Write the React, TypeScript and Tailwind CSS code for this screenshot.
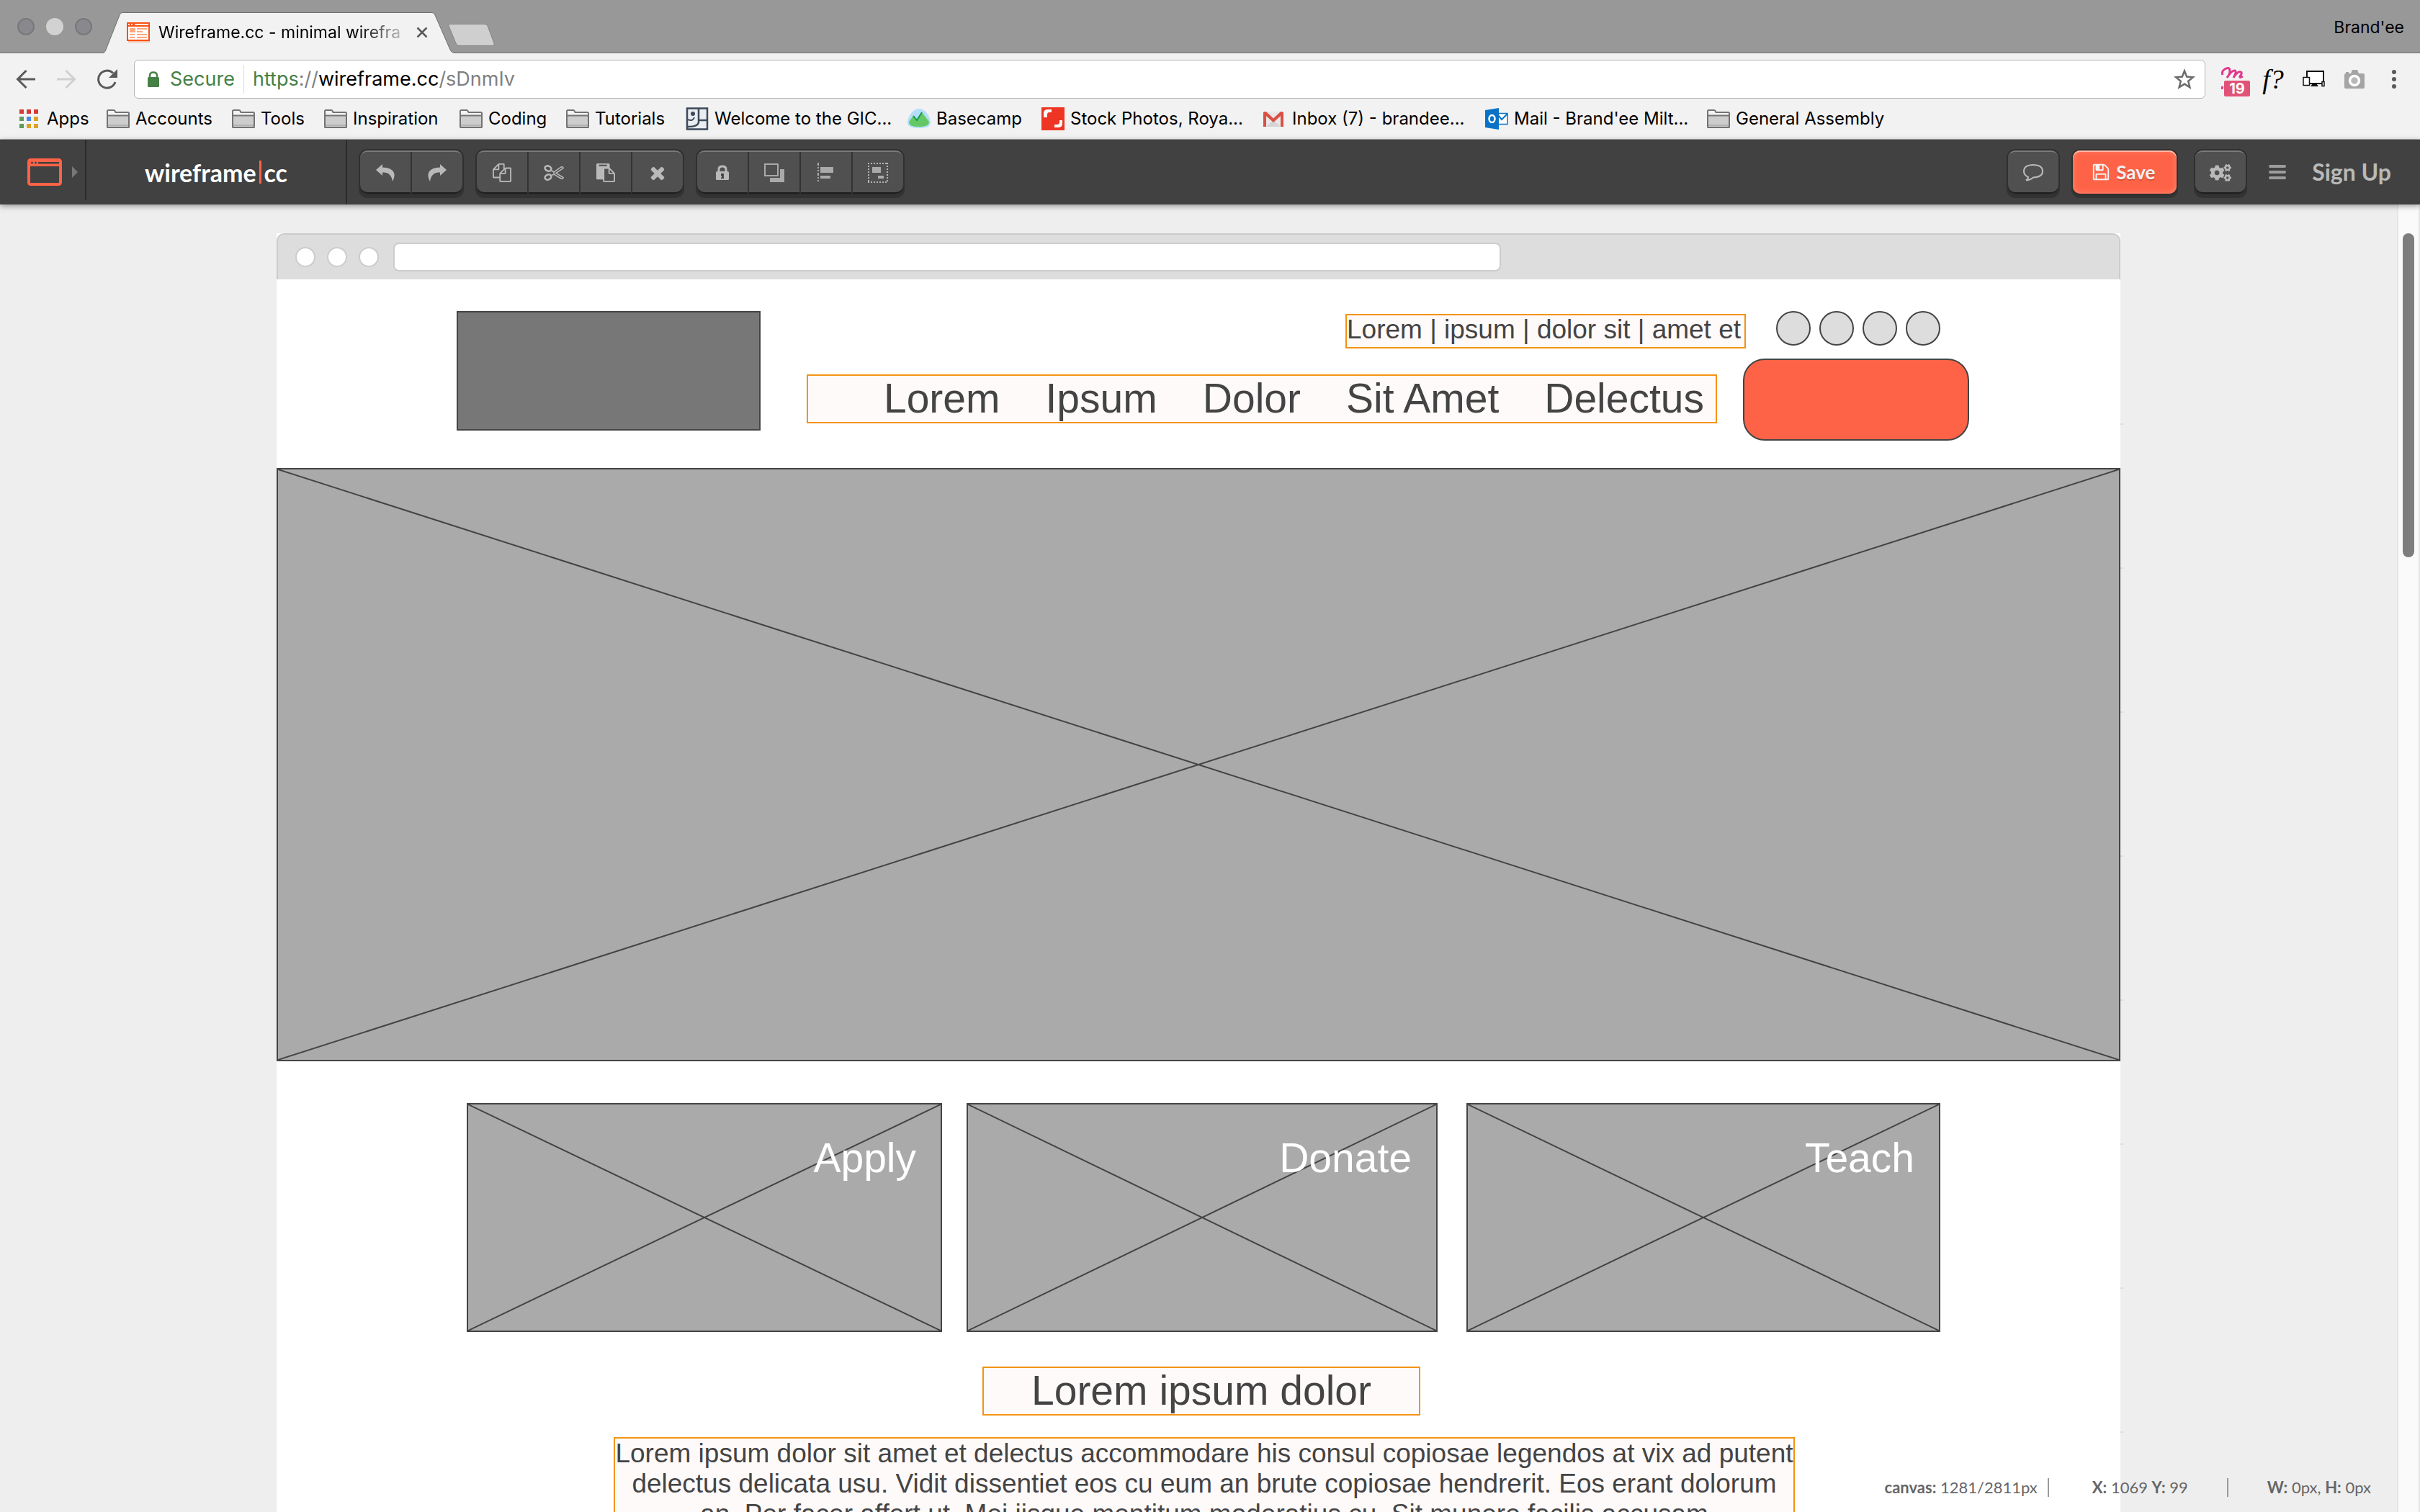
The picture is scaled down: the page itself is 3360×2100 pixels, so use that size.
import React from "react";
import { FaCogs } from "react-icons/fa";

function Folder() {
  return (
    <svg width="32" height="26" viewBox="0 0 32 26" className="shrink-0" aria-hidden="true">
      <path d="M1 24.5V2.5Q1 1 2.5 1H10q1 0 1.500 1l1 2H29.500Q31 4 31 5.500V24.500Z" fill="#f3f3f3" stroke="#737373" strokeWidth="2" />
      <path d="M2 9H30V24H2Z" fill="#cdcdcd" />
      <path d="M1 8.500H31" stroke="#737373" strokeWidth="2" />
      <path d="M2 22H30" stroke="#b4b4b4" strokeWidth="2" />
      <path d="M1 25H31" stroke="#737373" strokeWidth="2" />
    </svg>
  );
}

function AppsGrid() {
  const colors = ["#d63a35", "#d63a35", "#d63a35", "#5d9c5a", "#4a87ee", "#dba325", "#5d9c5a", "#dba325", "#dba325"];
  return (
    <svg width="27" height="26" viewBox="0 0 27 26" className="shrink-0" aria-hidden="true">
      {colors.map((c, i) => (
        <rect key={i} x={(i % 3) * 10 + 1} y={Math.floor(i / 3) * 10} width="6" height="6" fill={c} />
      ))}
    </svg>
  );
}

function Welcome() {
  return (
    <svg width="32" height="32" viewBox="0 0 32 32" className="shrink-0" aria-hidden="true">
      <path d="M2 1.500H30V30.500H2Z" fill="#e9edf1" stroke="#3d4a59" strokeWidth="2.500" />
      <path d="M18 2V20Q18 27 3 27M18 18H30" fill="none" stroke="#3d4a59" strokeWidth="2.500" />
      <circle cx="10" cy="9" r="3" fill="#3d4a59" />
      <path d="M3 17Q10 20 12 14" fill="none" stroke="#3d4a59" strokeWidth="2" />
    </svg>
  );
}

function Basecamp() {
  return (
    <svg width="32" height="28" viewBox="0 0 32 28" className="shrink-0" aria-hidden="true">
      <path d="M16 0C26 0 32 13 32 19C32 25 25 27 16 27C7 27 0 25 0 19C0 13 6 0 16 0Z" fill="#b5defb" />
      <path d="M2 18L8 10L13 16L20 5L30 18C30 24 24 25 16 25C8 25 2 24 2 18Z" fill="#64c864" />
      <path d="M8 10L13 16L20 5" fill="none" stroke="#149a51" strokeWidth="2" />
    </svg>
  );
}

function Stock() {
  return (
    <svg width="32" height="32" viewBox="0 0 32 32" className="shrink-0" aria-hidden="true">
      <path d="M0 0H32V32H0Z" fill="#ee3524" />
      <path d="M3 14V8Q3 3 9 3H14V7H11Q8 7 8 10V14ZM29 18V23Q29 28 23 28H18V24H21Q25 24 25 21V18Z" fill="#fff" />
    </svg>
  );
}

function Gmail() {
  return (
    <svg width="28" height="21" viewBox="0 0 28 21" className="shrink-0" aria-hidden="true">
      <path d="M1 0H27V21H1Z" fill="#e9e7e7" />
      <path d="M4 21L14 12L24 21Z" fill="#d6d4d4" />
      <path d="M0 1Q3 -1 5 1L14 9.500L23 1Q25 -1 28 1V21H24V6L14 15L4 6V21H0Z" fill="#d94f43" />
    </svg>
  );
}

function Outlook() {
  return (
    <svg width="32" height="30" viewBox="0 0 32 30" className="shrink-0" aria-hidden="true">
      <path d="M17 7.500H31V22.500H17Z" fill="#fff" stroke="#0a72c6" strokeWidth="1.500" />
      <path d="M18 10L23 16L31 8" fill="none" stroke="#0a72c6" strokeWidth="2" />
      <path d="M0 3L19 0V30L0 27Z" fill="#0a72c6" />
      <ellipse cx="9.500" cy="15" rx="4" ry="5" fill="none" stroke="#fff" strokeWidth="2.500" />
    </svg>
  );
}

type Bookmark = { label: string; icon: React.ReactNode; width: string };
const bookmarks: Bookmark[] = [
  { label: "Apps", icon: <AppsGrid />, width: "w-[122px] gap-3" },
  { label: "Accounts", icon: <Folder />, width: "w-[174px] gap-2" },
  { label: "Tools", icon: <Folder />, width: "w-[128px] gap-2" },
  { label: "Inspiration", icon: <Folder />, width: "w-[188px] gap-2" },
  { label: "Coding", icon: <Folder />, width: "w-[148px] gap-2" },
  { label: "Tutorials", icon: <Folder />, width: "w-[166px] gap-2" },
  { label: "Welcome to the GIC...", icon: <Welcome />, width: "w-[308px] gap-2" },
  { label: "Basecamp", icon: <Basecamp />, width: "w-[186px] gap-2" },
  { label: "Stock Photos, Roya...", icon: <Stock />, width: "w-[308px] gap-2" },
  { label: "Inbox (7) - brandee...", icon: <Gmail />, width: "w-[308px] gap-3" },
  { label: "Mail - Brand'ee Milt...", icon: <Outlook />, width: "w-[308px] gap-2" },
  { label: "General Assembly", icon: <Folder />, width: "w-[260px] gap-2" },
];

function TabStrip() {
  return (
    <div className="relative flex h-[74px] items-center border-b border-[#6f6f6f] bg-[#989898]">
      <div className="flex gap-4 pl-6">
        <span className="size-6 rounded-full border-2 border-[#78777b] bg-[#89888c]" />
        <span className="size-6 rounded-full bg-[#d2d2d2]" />
        <span className="size-6 rounded-full border-2 border-[#78777b] bg-[#89888c]" />
      </div>
      <div className="relative ml-4 flex h-[74px] w-[486px] items-center pt-4 pl-8">
        <svg width="486" height="58" viewBox="0 0 486 58" className="absolute top-[17px] left-0" aria-hidden="true">
          <path d="M0 56.500Q2 55 3 52L22 4Q23 .500 26 .500H456Q459 .500 460 4L481 52Q482 55 486 56.500V58H0Z" fill="#f2f2f2" />
          <path d="M0 56.500Q2 55 3 52L22 4Q23 .500 26 .500H456Q459 .500 460 4L481 52Q482 55 486 56.500" fill="none" stroke="#6f6f6f" />
        </svg>
        <svg width="32" height="28" viewBox="0 0 32 28" className="relative shrink-0" aria-hidden="true">
          <path d="M0 0H32V26H0Z" fill="#fb4f14" />
          <path d="M2 6H30V24H2ZM2 2H4V4H2ZM6 2H8V4H6ZM11 2H30V4H11Z" fill="#fff" />
          <path d="M4 8H12V14H4ZM14 8H28V10H14ZM14 12H22V14H14ZM4 16H11V18H4ZM14 16H28V18H14ZM4 20H11V22H4ZM14 20H28V22H14Z" fill="#fda87f" />
          <path d="M2 26H32V28H2Z" fill="#f6bfa5" />
        </svg>
        <span className="relative ml-3 w-[352px] bg-linear-to-r from-black from-75% to-[#f2f2f2] bg-clip-text text-[23px] leading-8 whitespace-nowrap text-transparent">
          Wireframe.cc - minimal wirefra
        </span>
        <button aria-label="Close tab" className="relative ml-[6px]">
          <svg width="16" height="16" viewBox="0 0 16 16">
            <path d="M1.500 1.500L14.500 14.500M14.500 1.500L1.500 14.500" stroke="#5a5a5a" strokeWidth="2.500" />
          </svg>
        </button>
      </div>
      <button aria-label="New tab" className="-ml-2 pt-6">
        <svg width="66" height="32" viewBox="0 0 66 32">
          <path d="M1 3Q0 .500 3 .500H50Q54 .500 55 3L64 27Q65 30.500 62 30.500H16Q12 30.500 11 27Z" fill="#cfcfcf" stroke="#868686" />
        </svg>
      </button>
      <span className="mr-[22px] ml-auto pt-1 text-[23px]">Brand'ee</span>
    </div>
  );
}

function AddressBar() {
  return (
    <div className="flex h-[72px] items-center bg-[#f2f2f2] pr-8 pl-[22px]">
      <button aria-label="Back">
        <svg width="28" height="28" viewBox="0 0 28 28"><path d="M27 14H3M14.500 2L2.500 14L14.500 26" fill="none" stroke="#5a5a5a" strokeWidth="3" /></svg>
      </button>
      <button aria-label="Forward" className="ml-7">
        <svg width="28" height="28" viewBox="0 0 28 28"><path d="M1 14H25M13.500 2L25.500 14L13.500 26" fill="none" stroke="#d0d0d0" strokeWidth="3" /></svg>
      </button>
      <button aria-label="Reload" className="ml-7">
        <svg width="30" height="28" viewBox="0 0 30 28">
          <path d="M26 18A12 12 0 1 1 23 5.500" fill="none" stroke="#5a5a5a" strokeWidth="3" />
          <path d="M29 0V12H17Z" fill="#5a5a5a" />
        </svg>
      </button>
      <div className="ml-[22px] flex h-[54px] flex-1 items-center rounded-md border border-[#b4b4b4] bg-white pr-[13px] pl-[17px]">
        <svg width="18" height="22" viewBox="0 0 18 22" aria-hidden="true">
          <path d="M4 9V6Q4 1.500 9 1.500Q14 1.500 14 6V9" fill="none" stroke="#458046" strokeWidth="2.500" />
          <rect x="1" y="8" width="16" height="14" rx="1.500" fill="#458046" />
        </svg>
        <span className="ml-[14px] text-[27px] text-[#458046]">Secure</span>
        <span className="ml-3 h-10 w-px bg-[#dcdcdc]" />
        <div role="textbox" aria-label="Address" className="ml-3 flex-1 text-[27px] text-[#808080]">
          <span className="text-[#458046]">https</span>://<span className="text-black">wireframe.cc</span>/sDnmIv
        </div>
        <button aria-label="Bookmark this page">
          <svg width="30" height="30" viewBox="0 0 30 30">
            <path d="M15 3.500L18.200 11.600L27 12.200L20.200 17.800L22.400 26.300L15 21.600L7.600 26.300L9.800 17.800L3 12.200L11.800 11.600Z" fill="none" stroke="#6b6b6b" strokeWidth="2.500" />
          </svg>
        </button>
      </div>
      <button aria-label="Momentum" className="relative ml-[22px] h-9 w-8">
        <svg width="32" height="36" viewBox="0 0 32 36">
          <path d="M2 12Q0 7 5 4Q12 0 12 7Q12 11 8 16Q15 5 19 6Q22 7 17 16Q23 6 27 8Q30 9 26 14Q25 17 30 14M2 28Q1 30 1 32" fill="none" stroke="#e0398c" strokeWidth="3" />
        </svg>
        <span className="absolute top-5 left-1 h-[22px] w-9 rounded-xs bg-[#e05277] text-[20px] leading-[22px] font-bold text-white">19</span>
      </button>
      <button aria-label="WhatFont" className="ml-6 h-11 w-8 font-['Liberation_Serif',serif] text-[38px] leading-10 italic">f?</button>
      <button aria-label="Viewport resizer" className="ml-6">
        <svg width="32" height="32" viewBox="0 -2 32 32">
          <path d="M7 11V3H30V20H11" fill="#fff" stroke="#111" strokeWidth="2" />
          <path d="M2 11.500H10.500V22.500H2Z" fill="#fff" stroke="#111" strokeWidth="1.500" />
          <path d="M15 20H20L23 24H12Z" fill="#111" />
          <path d="M28 17.500H31V23.500H28Z" fill="#fff" stroke="#111" strokeWidth="1.500" />
        </svg>
      </button>
      <button aria-label="Screenshot" className="ml-[26px]">
        <svg width="30" height="28" viewBox="0 0 30 28">
          <path d="M1 8Q1 6 3 6V4H7V6H10L12 1H19L21 6H27Q29 6 29 8V25Q29 27 27 27H3Q1 27 1 25Z" fill="#a5a5a5" />
          <circle cx="15" cy="16" r="6.500" fill="#b9b9b9" stroke="#fff" strokeWidth="3.500" />
        </svg>
      </button>
      <button aria-label="Browser menu" className="ml-9">
        <svg width="8" height="28" viewBox="0 0 8 28"><circle cx="4" cy="4" r="3" fill="#5a5a5a" /><circle cx="4" cy="14" r="3" fill="#5a5a5a" /><circle cx="4" cy="24" r="3" fill="#5a5a5a" /></svg>
      </button>
    </div>
  );
}

function Fa({ d, size = 26 }: { d: string; size?: number }) {
  return (
    <svg width={size} height={size} viewBox="0 0 1792 1792" fill="currentColor" aria-hidden="true">
      <path d={d} />
    </svg>
  );
}

const paths = {
  copy: "M1696 384q40 0 68 28t28 68v1216q0 40-28 68t-68 28h-960q-40 0-68-28t-28-68v-288h-544q-40 0-68-28t-28-68v-672q0-40 20-88t48-76l408-408q28-28 76-48t88-20h416q40 0 68 28t28 68v328q68-40 128-40h416zm-544 213l-299 299h299v-299zm-640-384l-299 299h299v-299zm196 647l316-316v-416h-384v416q0 40-28 68t-68 28h-416v640h512v-256q0-40 20-88t48-76zm956 804v-1152h-384v416q0 40-28 68t-68 28h-416v640h896z",
  paste: "M768 1664h896v-640h-416q-40 0-68-28t-28-68v-416h-384v1152zm256-1440v-64q0-13-9.500-22.500t-22.500-9.500h-704q-13 0-22.500 9.500t-9.500 22.500v64q0 13 9.500 22.500t22.500 9.500h704q13 0 22.500-9.500t9.500-22.500zm256 672h299l-299-299v299zm512 128v672q0 40-28 68t-68 28h-960q-40 0-68-28t-28-68v-160h-544q-40 0-68-28t-28-68v-1344q0-40 28-68t68-28h1088q40 0 68 28t28 68v328q21 13 36 28l408 408q28 28 48 76t20 88z",
  times: "M1490 1322q0 40-28 68l-136 136q-28 28-68 28t-68-28l-294-294-294 294q-28 28-68 28t-68-28l-136-136q-28-28-28-68t28-68l294-294-294-294q-28-28-28-68t28-68l136-136q28-28 68-28t68 28l294 294 294-294q28-28 68-28t68 28l136 136q28 28 28 68t-28 68l-294 294 294 294q28 28 28 68z",
  save: "M512 1536h768v-384h-768v384zm896 0h128v-896q0-14-10-38.500t-20-34.500l-281-281q-10-10-34-20t-39-10v416q0 40-28 68t-68 28h-576q-40 0-68-28t-28-68v-416h-128v1280h128v-416q0-40 28-68t68-28h832q40 0 68 28t28 68v416zm-384-928v-320q0-13-9.500-22.500t-22.500-9.500h-192q-13 0-22.500 9.500t-9.500 22.500v320q0 13 9.500 22.500t22.500 9.500h192q13 0 22.500-9.500t9.500-22.500zm640 32v928q0 40-28 68t-68 28h-1344q-40 0-68-28t-28-68v-1344q0-40 28-68t68-28h928q40 0 88 20t76 48l280 280q28 28 48 76t20 88z",
};

const undo = (
  <svg width="28" height="26" viewBox="0 0 28 26" fill="currentColor"><path d="M10 1L1 9L10 17V12.500Q22 11.500 24 25Q27 19 26.500 15Q25 6 10 5.500Z" /></svg>
);
const redo = (
  <svg width="28" height="26" viewBox="0 0 28 26" fill="currentColor"><path d="M18 1L27 9L18 17V12.500Q6 11.500 4 25Q1 19 1.500 15Q3 6 18 5.500Z" /></svg>
);
const scissors = (
  <svg width="28" height="24" viewBox="0 0 28 24" fill="none" stroke="currentColor">
    <ellipse cx="6" cy="6" rx="4.500" ry="3.500" strokeWidth="2.500" transform="rotate(25 6 6)" />
    <ellipse cx="6" cy="18" rx="4.500" ry="3.500" strokeWidth="2.500" transform="rotate(-25 6 18)" />
    <path d="M10 8.500L14 11L24 4Q27 3 27 5.500L17 12.500L27 18.500Q27 21 24 20L14 14L10 16" strokeWidth="1.500" />
    <circle cx="14.500" cy="12.500" r="1" strokeWidth="1" />
  </svg>
);
const lock = (
  <svg width="18" height="22" viewBox="0 0 18 22">
    <path d="M4 10V6Q4 2 9 2Q14 2 14 6V10" fill="none" stroke="currentColor" strokeWidth="3" />
    <rect x="0" y="9" width="18" height="12" rx="1.500" fill="currentColor" />
    <path d="M7 12H11V15L10 16H11V19H7V18L8 17V15H7Z" fill="#414141" />
  </svg>
);
const layers = (
  <svg width="28" height="26" viewBox="0 0 28 26">
    <path d="M22 8H28V26H8V20H22Z" fill="#aaa" />
    <path d="M1 1H19V17H1Z" fill="none" stroke="#aaa" strokeWidth="2" />
  </svg>
);
const align = (
  <svg width="24" height="28" viewBox="0 0 24 28">
    <path d="M1 0V28" stroke="#aaa" strokeWidth="2" strokeDasharray="4 2 2 2 2 2" />
    <path d="M4 6H22V14H4ZM4 18H18V22H4Z" fill="#aaa" />
  </svg>
);
const group = (
  <svg width="28" height="28" viewBox="0 0 28 28">
    <path d="M0 1H28M0 27H28M1 0V28M27 0V28" fill="none" stroke="#b4b4b4" strokeWidth="2" strokeDasharray="2 2" />
    <path d="M6 6H18V14H6ZM14 18H22V22H14Z" fill="#aaa" />
  </svg>
);

const raised =
  "rounded-[10px] border-t-2 border-[#7a7a7a] bg-[#505050] text-[#b9b9b9] shadow-[inset_0_-2px_0_#1f1f1f,0_0_0_2px_#303030,0_4px_0_2px_#333]";

function ToolGroup({ items }: { items: [string, React.ReactNode][] }) {
  return (
    <div className={`flex h-[60px] divide-x-2 divide-[#333] ${raised}`}>
      {items.map(([label, icon]) => (
        <button key={label} aria-label={label} className="box-content flex h-[58px] w-[70px] items-center justify-center">
          {icon}
        </button>
      ))}
    </div>
  );
}

function AppBar() {
  return (
    <header className="relative z-10 flex h-[90px] items-center bg-[#414141] font-[Lato,sans-serif] shadow-[0_2px_8px_rgba(0,0,0,0.4)]">
      <button aria-label="Choose device" className="flex h-[84px] w-[120px] items-center gap-[14px] self-start border-r-2 border-[#2b2b2b] pt-[6px] pl-[38px]">
        <svg width="48" height="38" viewBox="0 0 48 38">
          <path fillRule="evenodd" d="M5 0H43Q48 0 48 5V33Q48 38 43 38H5Q0 38 0 33V5Q0 0 5 0ZM4 11V34H44V11Z" fill="#ff6347" />
          <circle cx="6.500" cy="6" r="1.500" fill="#414141" /><circle cx="11.500" cy="6" r="1.500" fill="#414141" />
          <path d="M15 5H44V7.500H15Z" fill="#414141" />
        </svg>
        <svg width="8" height="16" viewBox="0 0 8 16"><path d="M0 0L8 8L0 16Z" fill="#777" /></svg>
      </button>
      <div className="flex h-full w-[362px] items-center justify-center border-r-2 border-[#2b2b2b] text-[34px] font-bold text-white">
        <span>wireframe</span>
        <span className="mx-1 h-8 w-[3px] bg-[#ff6347]" />
        <span>cc</span>
      </div>
      <div className="ml-[18px] flex gap-5">
        <ToolGroup items={[["Undo", undo], ["Redo", redo]]} />
        <ToolGroup items={[["Copy", <Fa d={paths.copy} />], ["Cut", scissors], ["Paste", <Fa d={paths.paste} />], ["Delete", <Fa d={paths.times} size={28} />]]} />
        <ToolGroup items={[["Lock", lock], ["Order", layers], ["Align", align], ["Group", group]]} />
      </div>
      <div className="ml-auto flex items-center pr-10">
        <button aria-label="Comments" className={`flex h-[60px] w-[70px] items-center justify-center ${raised}`}>
          <svg width="28" height="24" viewBox="0 0 28 24" fill="none" stroke="currentColor" strokeWidth="2">
            <path d="M7 18Q1 15 1 10Q1 1 14 1Q27 1 27 10Q27 18 14 18.500Q10 22 4 22.500Q7 21 7 18Z" />
          </svg>
        </button>
        <button className="ml-5 flex h-[60px] w-36 items-center justify-center gap-2 rounded-[10px] bg-[#ff6347] pr-1 text-[26px] font-bold text-[#f2f2f2] shadow-[inset_0_2px_0_#ffb8a8,inset_0_0_8px_#ff8b76,0_0_0_2px_#303030,0_4px_0_2px_#333] [text-shadow:0_2px_0_rgba(0,0,0,0.2)]">
          <Fa d={paths.save} />
          Save
        </button>
        <button aria-label="Settings" className={`ml-[26px] flex h-[60px] w-[70px] items-center justify-center ${raised}`}>
          <FaCogs size={30} />
        </button>
        <button aria-label="Menu" className="ml-8 grid gap-1">
          <span className="h-1 w-6 rounded-xs bg-[#9c9c9c]" />
          <span className="h-1 w-6 rounded-xs bg-[#9c9c9c]" />
          <span className="h-1 w-6 rounded-xs bg-[#9c9c9c]" />
        </button>
        <a href="#signup" className="ml-9 text-[32px] font-bold text-[#b9b9b9]">Sign Up</a>
      </div>
    </header>
  );
}

function Cross() {
  return (
    <svg className="absolute inset-0 size-full" viewBox="0 0 100 100" preserveAspectRatio="none" aria-hidden="true">
      <path d="M0 0L100 100M100 0L0 100" stroke="#444" strokeWidth="2" vectorEffect="non-scaling-stroke" />
    </svg>
  );
}

const textBox = "border-2 border-[#f39314] bg-[#fffafa] text-[#444]";

function Canvas() {
  return (
    <div className="relative w-[2560px] max-w-full self-start bg-white font-['Liberation_Sans',sans-serif] text-[#444]">
      <div className="absolute top-[264px] left-full flex flex-col gap-[198px]">
        {[1, 2, 3, 4, 5, 6, 7, 8].map((mark) => (
          <span key={mark} className="h-[2px] w-1 bg-[#ddd]" />
        ))}
      </div>
      <div className="flex h-16 items-center rounded-t-[10px] border-2 border-b-0 border-[#ccc] bg-[#ddd] pl-6">
        <div className="flex gap-4">
          <span className="size-7 rounded-full border-2 border-[#ccc] bg-white" />
          <span className="size-7 rounded-full border-2 border-[#ccc] bg-white" />
          <span className="size-7 rounded-full border-2 border-[#ccc] bg-white" />
        </div>
        <div className="ml-5 h-10 w-[1538px] rounded-lg border-2 border-[#ccc] bg-white" />
      </div>
      <div className="flex h-[262px] items-start pt-11 pl-[250px]">
        <div className="h-[166px] w-[422px] border-2 border-[#444] bg-[#777]" />
        <div className="ml-16 w-[1614px]">
          <div className="flex items-start justify-end pr-10">
            <p className={`mt-1 h-12 w-[556px] text-[37px] leading-10 whitespace-nowrap ${textBox}`}>Lorem | ipsum | dolor sit | amet et</p>
            <div className="ml-[42px] flex gap-3">
              <span className="size-12 rounded-full border-2 border-[#444] bg-[#ddd]" />
              <span className="size-12 rounded-full border-2 border-[#444] bg-[#ddd]" />
              <span className="size-12 rounded-full border-2 border-[#444] bg-[#ddd]" />
              <span className="size-12 rounded-full border-2 border-[#444] bg-[#ddd]" />
            </div>
          </div>
          <div className="mt-[14px] flex items-start gap-9">
            <nav className={`mt-[22px] flex h-[68px] flex-1 justify-end gap-[63px] pr-4 text-[57px] leading-[62px] ${textBox}`}>
              <a href="#lorem">Lorem</a>
              <a href="#ipsum">Ipsum</a>
              <a href="#dolor">Dolor</a>
              <a href="#sit-amet">Sit Amet</a>
              <a href="#delectus">Delectus</a>
            </nav>
            <button aria-label="Call to action" className="h-[114px] w-[314px] rounded-[30px] border-2 border-[#444] bg-[#ff6347]" />
          </div>
        </div>
      </div>
      <div className="relative h-[824px] border-2 border-[#444] bg-[#aaa]">
        <Cross />
      </div>
      <div className="mt-[58px] flex pl-[264px]">
        {[
          ["Apply", "w-[660px]"],
          ["Donate", "ml-[34px] w-[654px]"],
          ["Teach", "ml-10 w-[658px]"],
        ].map(([label, box]) => (
          <div key={label} className={`relative h-[318px] border-2 border-[#444] bg-[#aaa] pt-[42px] pr-[34px] text-right ${box}`}>
            <Cross />
            <p className="relative text-[57px] leading-[64px] text-white">{label}</p>
          </div>
        ))}
      </div>
      <h1 className={`mt-12 ml-[980px] h-[68px] w-[608px] text-center text-[57px] leading-[62px] ${textBox}`}>Lorem ipsum dolor</h1>
      <p className={`mt-[30px] ml-[468px] w-[1640px] text-center text-[37px] leading-[42px] ${textBox}`}>
        Lorem ipsum dolor sit amet et delectus accommodare his consul copiosae legendos at vix ad putent
        delectus delicata usu. Vidit dissentiet eos cu eum an brute copiosae hendrerit. Eos erant dolorum
        <br />
        an. Per facer affert ut. Mei iisque mentitum moderatius cu. Sit munere facilis accusam
      </p>
    </div>
  );
}

export default function App() {
  return (
    <div className="flex h-screen flex-col overflow-hidden bg-[#eee] font-[Inter,sans-serif] text-black">
      <TabStrip />
      <AddressBar />
      <nav aria-label="Bookmarks" className="flex h-12 items-center border-b border-[#a9a9a9] bg-[#f2f2f2] pb-[9px] pl-[26px]">
        {bookmarks.map((b) => (
          <a key={b.label} href="#bookmark" className={`flex shrink-0 items-center text-[24px] whitespace-nowrap ${b.width}`}>
            {b.icon}
            {b.label}
          </a>
        ))}
      </nav>
      <AppBar />
      <div className="flex min-h-0 flex-1">
        <main className="relative flex min-w-0 flex-1 justify-center overflow-hidden pt-10">
          <Canvas />
          <div className="absolute right-9 bottom-[21px] flex items-center font-[Lato,sans-serif] text-[22px] leading-[26px] text-[#666]">
            <span className="border-r-2 border-[#999] pr-[14px]"><b>canvas:</b> 1281/2811px</span>
            <span className="ml-[60px] border-r-2 border-[#999] pr-[54px]"><b>X:</b> 1069 <b>Y:</b> 99</span>
            <span className="ml-[54px]"><b>W:</b> 0px, <b>H:</b> 0px</span>
          </div>
        </main>
        <div className="w-8 border-x-2 border-[#e6e6e6] bg-[#fafafa] pt-10">
          <div className="mx-auto h-[450px] w-4 rounded-full bg-[#7d7d7d]" />
        </div>
      </div>
    </div>
  );
}
